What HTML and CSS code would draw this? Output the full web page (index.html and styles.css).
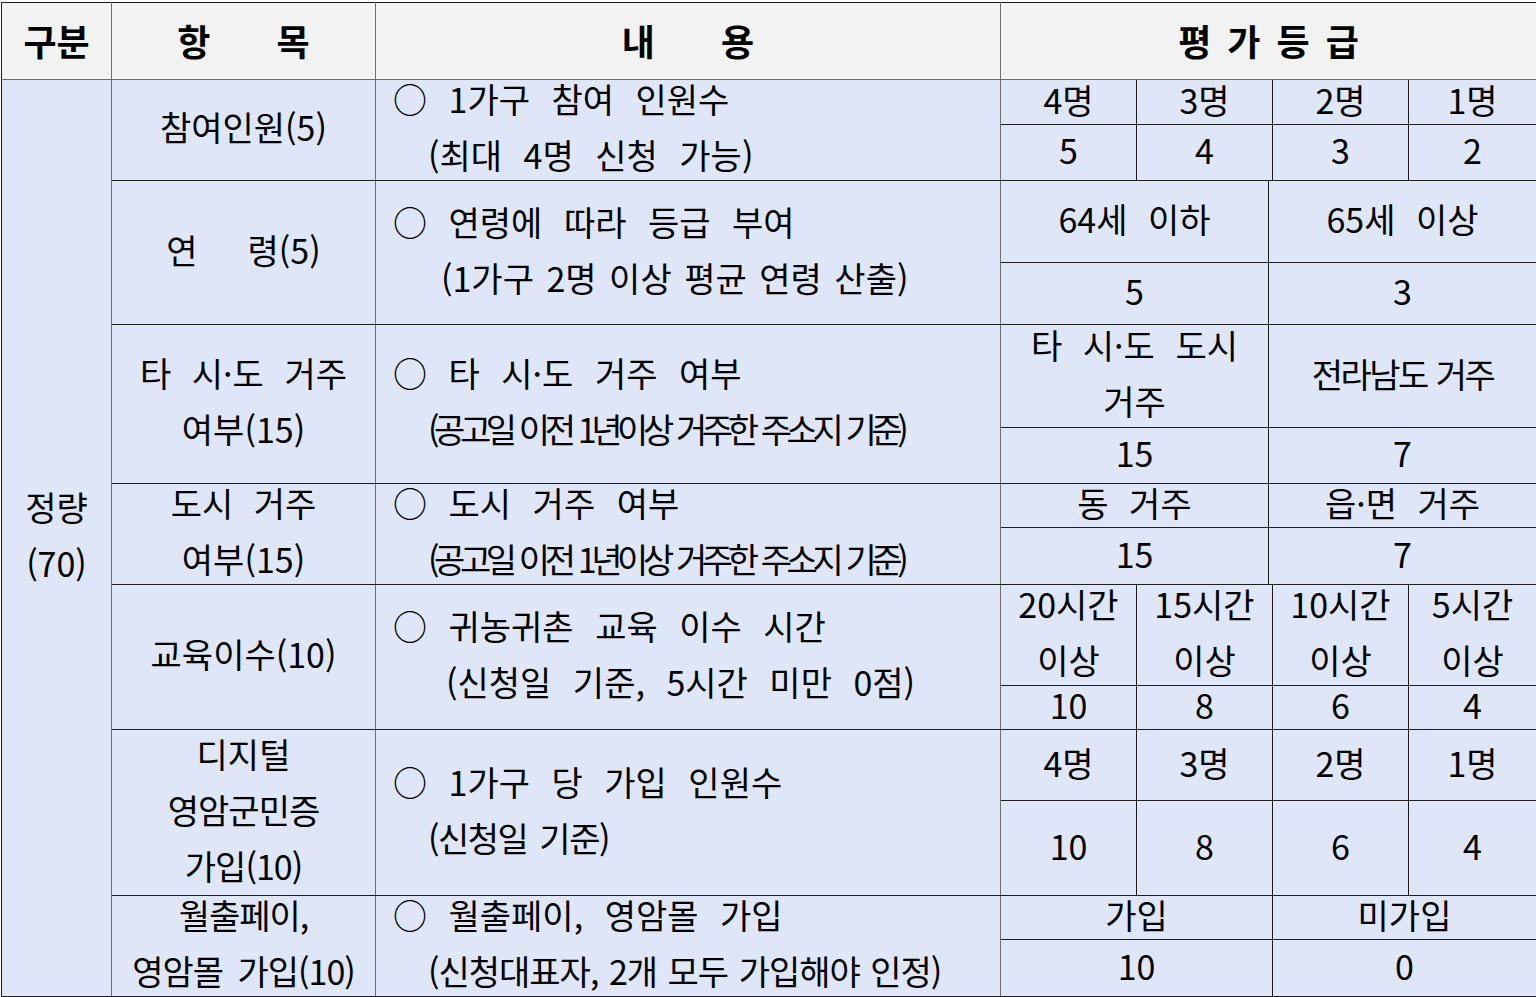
FILE: index.html
```html
<!DOCTYPE html>
<html lang="ko">
<head>
<meta charset="utf-8">
<title>평가 기준표</title>
<link rel="stylesheet" href="styles.css">
</head>
<body>
<table class="grid">
  <colgroup>
    <col class="c-cat"><col class="c-item"><col class="c-text">
    <col class="c-s1"><col class="c-s2"><col class="c-s3"><col class="c-s4"><col class="c-s5">
  </colgroup>
  <thead>
    <tr class="h-head">
      <th><span class="spread">구분</span></th>
      <th><span class="spread wide">항 목</span></th>
      <th><span class="spread wide">내 용</span></th>
      <th colspan="5"><span class="spread narrow">평 가 등 급</span></th>
    </tr>
  </thead>
  <tbody>
    <tr class="h45">
      <td rowspan="14" class="cat"><div class="ln">정량</div><div class="ln">(70)</div></td>
      <td rowspan="2" class="item"><div class="ln">참여인원(5)</div></td>
      <td rowspan="2" class="text"><div class="ln main">○ 1가구 참여 인원수</div><div class="ln sub">(최대 4명 신청 가능)</div></td>
      <td>4명</td><td colspan="2">3명</td><td>2명</td><td>1명</td>
    </tr>
    <tr class="h56">
      <td>5</td><td colspan="2">4</td><td>3</td><td>2</td>
    </tr>
    <tr class="h82">
      <td rowspan="2" class="item"><div class="ln"><span class="gap-yr">연</span>령(5)</div></td>
      <td rowspan="2" class="text"><div class="ln main">○ 연령에 따라 등급 부여</div><div class="ln sub sub2">(1가구 2명 이상 평균 연령 산출)</div></td>
      <td colspan="2">64세 이하</td><td colspan="3">65세 이상</td>
    </tr>
    <tr class="h62">
      <td colspan="2">5</td><td colspan="3">3</td>
    </tr>
    <tr class="h103">
      <td rowspan="2" class="item"><div class="ln">타 시·도 거주</div><div class="ln">여부(15)</div></td>
      <td rowspan="2" class="text"><div class="ln main">○ 타 시·도 거주 여부</div><div class="ln sub cond">(공고일 이전 1년이상 거주한 주소지 기준)</div></td>
      <td colspan="2"><div class="ln">타 시·도 도시</div><div class="ln">거주</div></td><td colspan="3"><span class="squeeze">전라남도 거주</span></td>
    </tr>
    <tr class="h56">
      <td colspan="2">15</td><td colspan="3">7</td>
    </tr>
    <tr class="h44">
      <td rowspan="2" class="item"><div class="ln">도시 거주</div><div class="ln">여부(15)</div></td>
      <td rowspan="2" class="text"><div class="ln main">○ 도시 거주 여부</div><div class="ln sub cond">(공고일 이전 1년이상 거주한 주소지 기준)</div></td>
      <td colspan="2">동 거주</td><td colspan="3">읍·면 거주</td>
    </tr>
    <tr class="h57">
      <td colspan="2">15</td><td colspan="3">7</td>
    </tr>
    <tr class="h100">
      <td rowspan="2" class="item"><div class="ln">교육이수(10)</div></td>
      <td rowspan="2" class="text"><div class="ln main">○ 귀농귀촌 교육 이수 시간</div><div class="ln sub sub3">(신청일 기준, 5시간 미만 0점)</div></td>
      <td><div class="ln">20시간</div><div class="ln">이상</div></td>
      <td colspan="2"><div class="ln">15시간</div><div class="ln">이상</div></td>
      <td><div class="ln">10시간</div><div class="ln">이상</div></td>
      <td><div class="ln">5시간</div><div class="ln">이상</div></td>
    </tr>
    <tr class="h44">
      <td>10</td><td colspan="2">8</td><td>6</td><td>4</td>
    </tr>
    <tr class="h71">
      <td rowspan="2" class="item"><div class="ln">디지털</div><div class="ln tight">영암군민증</div><div class="ln tight">가입(10)</div></td>
      <td rowspan="2" class="text"><div class="ln main">○ 1가구 당 가입 인원수</div><div class="ln sub cond-s">(신청일 기준)</div></td>
      <td>4명</td><td colspan="2">3명</td><td>2명</td><td>1명</td>
    </tr>
    <tr class="h95">
      <td>10</td><td colspan="2">8</td><td>6</td><td>4</td>
    </tr>
    <tr class="h44">
      <td rowspan="2" class="item"><div class="ln tight">월출페이,</div><div class="ln tight">영암몰 가입(10)</div></td>
      <td rowspan="2" class="text"><div class="ln main">○ 월출페이, 영암몰 가입</div><div class="ln sub cond-m">(신청대표자, 2개 모두 가입해야 인정)</div></td>
      <td colspan="3">가입</td><td colspan="2">미가입</td>
    </tr>
    <tr class="h57">
      <td colspan="3">10</td><td colspan="2">0</td>
    </tr>
  </tbody>
</table>
</body>
</html>
```
FILE: styles.css
```css
html, body {
  margin: 0;
  padding: 0;
  background: #ffffff;
}
body {
  padding: 2px 0 0 1px;
  font-family: "Noto Sans CJK KR", "Noto Sans", sans-serif;
  color: #000;
}
.grid {
  border-collapse: collapse;
  table-layout: fixed;
  width: 1535px;
  background: #dfe6f7;
  font-size: 34px;
}
.c-cat { width: 110px; }
.c-item { width: 264px; }
.c-text { width: 625px; }
.c-s1 { width: 136px; }
.c-s2 { width: 132px; }
.c-s3 { width: 4px; }
.c-s4 { width: 136px; }
.c-s5 { width: 128px; }

.grid th, .grid td {
  border: 1px solid #1e1e1e;
  padding: 0;
  text-align: center;
  vertical-align: middle;
  white-space: nowrap;
  line-height: 36px;
  word-spacing: 11px;
}
.grid td:not(:has(.ln)) {
  padding-bottom: 5px;
}
.grid th {
  background: #f2f2f2;
  font-weight: bold;
  font-size: 36px;
  border-color: #1e1e1e #6e6e6e #6e6e6e #1e1e1e;
  padding-bottom: 2px;
}
.h-head { height: 77px; }
.h44 { height: 44px; }
.h45 { height: 45px; }
.h56 { height: 56px; }
.h57 { height: 57px; }
.h62 { height: 62px; }
.h71 { height: 71px; }
.h82 { height: 82px; }
.h95 { height: 95px; }
.h100 { height: 100px; }
.h103 { height: 103px; }

.grid td.cat, .grid td.item, .grid td.text {
  border-right-color: #6e6e6e;
}

.spread {
  display: inline-flex;
  word-spacing: 0;
}
.wide { word-spacing: 56px; }
.narrow { word-spacing: 6px; }

.ln {
  height: 44px;
  line-height: 38px;
}
.ln + .ln { margin-top: 12px; }

.item { word-spacing: 14px; }
.tight { letter-spacing: -1px; word-spacing: 6px; }

.text { text-align: left; }
.text .ln { text-align: left; }
.main {
  padding-left: 17px;
  word-spacing: 12px;
}
.sub {
  padding-left: 52px;
  word-spacing: 12px;
}
.sub2 { padding-left: 65px; word-spacing: 3px; }
.sub3 { padding-left: 70px; }
.cond {
  letter-spacing: -5.4px;
  word-spacing: 3px;
}
.cond-s {
  letter-spacing: -1.5px;
  word-spacing: 4px;
}
.cond-m {
  letter-spacing: -1px;
  word-spacing: 2px;
}
.squeeze { letter-spacing: -2.5px; word-spacing: 2px; }
.gap-yr { margin-right: 50px; }
.cat .ln { text-align: center; }
```
